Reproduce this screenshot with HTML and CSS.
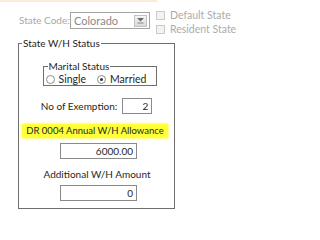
FILE: index.html
```html
<!DOCTYPE html>
<html>
<head>
<meta charset="utf-8">
<link rel="stylesheet" href="styles.css">
</head>
<body>
<div class="topband"></div>
<div class="row1">
  <span class="lbl-dis">State Code:</span>
  <div class="combo">
    <span class="combo-text">Colorado</span>
    <span class="combo-btn"><svg width="7" height="6" viewBox="0 0 7 6"><path d="M0 0H7L3.5 3.5Z" fill="#6a6a6a"/><path d="M0.5 5H6.5" stroke="#8a8a8a" stroke-width="1"/></svg></span>
  </div>
  <div class="checks">
    <label class="chk"><span class="box"></span>Default State</label>
    <label class="chk"><span class="box"></span>Resident State</label>
  </div>
</div>
<fieldset class="group">
  <legend>State W/H Status</legend>
  <div class="gbody">
    <fieldset class="marital">
      <legend>Marital Status</legend>
      <div class="radios">
        <span class="radio"><span class="circ"></span>Single</span>
        <span class="radio"><span class="circ on"></span>Married</span>
      </div>
    </fieldset>
    <div class="exrow">
      <span>No of Exemption:</span>
      <div class="input small">2</div>
    </div>
    <div class="hl">DR 0004 Annual W/H Allowance</div>
    <div class="input wide first">6000.00</div>
    <div class="cap">Additional W/H Amount</div>
    <div class="input wide">0</div>
  </div>
</fieldset>
</body>
</html>
```
FILE: styles.css
```css
* { box-sizing: border-box; }
html, body { overflow: hidden; }
body {
  margin: 0;
  width: 240px;
  height: 218px;
  background: #fff;
  font-family: "Lato", "Open Sans", sans-serif;
  font-size: 10px;
  color: #262626;
}
.topband {
  width: 157px;
  height: 2px;
  background: #fcebd8;
}
.row1 {
  display: flex;
  align-items: flex-start;
  padding-left: 19px;
  height: 35px;
}
.lbl-dis {
  color: #a8a8a8;
  margin-top: 10px;
  line-height: 17px;
  width: 51px;
  flex: none;
  white-space: nowrap;
}
.combo {
  flex: none;
  width: 80px;
  height: 17px;
  margin-top: 10px;
  border: 1px solid #a4a4a4;
  display: flex;
  align-items: center;
  justify-content: space-between;
  padding-left: 3px;
  padding-right: 2px;
}
.combo-text { color: #8a8a8a; font-size: 11px; }
.combo-btn {
  width: 13px;
  height: 12px;
  background: linear-gradient(#f6f6f6, #dadada);
  border: 1px solid #c2c2c2;
  display: flex;
  align-items: center;
  justify-content: center;
}
.checks {
  display: flex;
  flex-direction: column;
  gap: 2px;
  margin-top: 7px;
  margin-left: 6px;
}
.chk {
  display: flex;
  align-items: center;
  color: #ababab;
  white-space: nowrap;
  height: 12px;
  font-size: 10.5px;
}
.box {
  width: 9px;
  height: 9px;
  border: 1px solid #cacaca;
  background: #f3f3f3;
  margin-right: 5px;
}
fieldset { min-width: 0; margin: 0; padding: 0; }
.group {
  margin-left: 18px;
  width: 157px;
  border: 1px solid #6e6e6e;
  padding-bottom: 7px;
}
.group > legend {
  padding: 0 1px;
  margin-left: 3px;
  line-height: 12px;
  color: #1c1c1c;
}
.gbody {
  display: flex;
  flex-direction: column;
  align-items: center;
}
.marital {
  margin: 11px 0 0 6px;
  width: 114px;
  border: 1px solid #6e6e6e;
}
.marital > legend {
  padding: 0 1px;
  margin-left: 4px;
  line-height: 12px;
}
.radios {
  display: flex;
  gap: 11px;
  padding-left: 2px;
  padding-top: 1px;
  line-height: 12px;
  font-size: 10.5px;
}
.radio {
  display: flex;
  align-items: center;
  white-space: nowrap;
}
.circ {
  width: 9px;
  height: 9px;
  border-radius: 50%;
  border: 1px solid #8c8c8c;
  margin-right: 4px;
  position: relative;
  background: #fff;
}
.circ.on::after {
  content: "";
  position: absolute;
  left: 2px;
  top: 2px;
  width: 3px;
  height: 3px;
  border-radius: 50%;
  background: #333;
}
.exrow {
  display: flex;
  align-items: center;
  margin-top: 12px;
  gap: 5px;
}
.input {
  height: 16px;
  border: 1px solid #8a8a8a;
  text-align: right;
  padding-right: 3px;
  line-height: 14px;
  background: #fff;
}
.input.small { width: 30px; }
.input.wide { width: 77px; margin-left: 4px; }
.hl {
  margin-top: 10px;
  margin-left: -3px;
  background: #ffff3a;
  padding: 1px 4px;
  line-height: 12px;
  font-size: 9.5px;
  white-space: nowrap;
  border-radius: 2px;
  box-shadow: 0 0 2px 1px #ffff70;
}
.input.first { margin-top: 5px; }
.cap {
  margin-top: 9px;
  margin-bottom: 5px;
  line-height: 12px;
  margin-left: 1px;
}
```
